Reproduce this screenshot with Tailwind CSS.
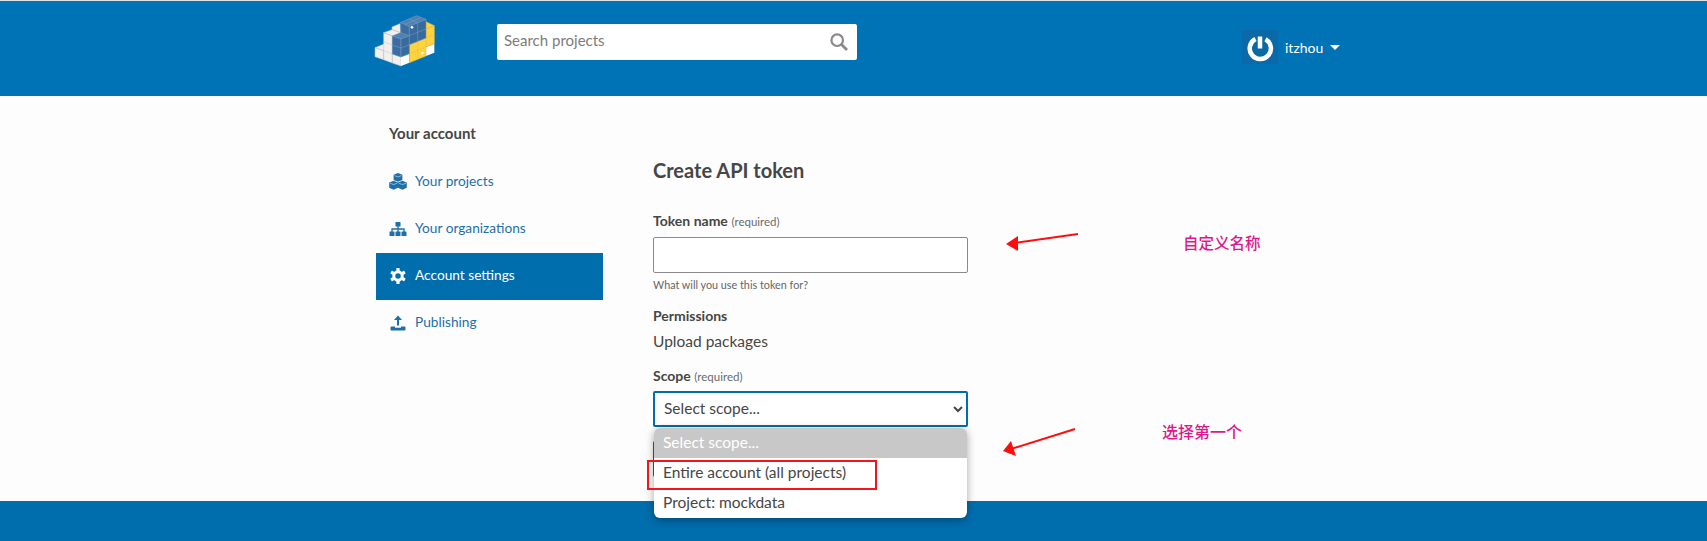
<!DOCTYPE html>
<html lang="en">
<head>
  <meta charset="UTF-8">
  <title>Create API token</title>
  <script src="https://cdn.jsdelivr.net/npm/@tailwindcss/browser@4"></script>
</head>
<body class="relative h-[541px] overflow-hidden bg-[#fdfdfd] text-[#464646] font-['Lato','Noto_Sans',sans-serif] flex flex-col">

<!-- header -->
<header class="h-[96px] shrink-0 bg-[#0073b7] border-t border-[#dfe3e6] flex pl-[365px]">
  <svg class="mt-[4px] shrink-0" width="100" height="70" viewBox="0 0 300 210">
    <!-- white stack -->
    <g fill="#f1f0ee" stroke="#c4c6c8" stroke-width="1.6" stroke-linejoin="round">
      <polygon points="81,74 81,66 105,56 107,83"/>
      <polygon points="56,83 82,93 107,83 81,74"/>
      <polygon points="30,128 56,137 81,127 55,118"/>
      <polygon points="56,164 30,155 30,128 56,137"/>
      <polygon points="82,174 56,164 56,83 82,93"/>
      <polygon points="108,183 82,174 82,147 108,156"/>
      <path d="M56,137 L82,147 M56,110 L82,120" fill="none"/>
    </g>
    <polygon points="108,183 133,173 133,146 108,156" fill="#ffffff"/>
    <polygon points="183,153 208,143 208,116 183,126" fill="#ffffff"/>
    <!-- yellow -->
    <g fill="#ffd242" stroke="#eebc2c" stroke-width="1.6" stroke-linejoin="round">
      <polygon points="183,72 208,62 183,50"/>
      <polygon points="183,126 208,116 208,62 183,72"/>
      <polygon points="133,173 183,153 183,99 133,119"/>
      <path d="M133,146 L183,126 M158,163 V109 M183,99 L208,89" fill="none"/>
    </g>
    <!-- blue -->
    <g fill="#3b6da1" stroke="#7a9dc2" stroke-width="1.6" stroke-linejoin="round">
      <polygon points="108,102 82,93 107,83 133,92" fill="#4f80b0"/>
      <polygon points="108,156 82,147 82,93 108,102"/>
      <polygon points="108,156 133,146 133,92 108,102" fill="#376a9d"/>
      <polygon points="133,65 107,52 107,83 133,92"/>
      <polygon points="133,119 183,99 183,43 133,63" fill="#376a9d"/>
      <polygon points="133,63 107,52 155,32 183,43" fill="#4f80b0"/>
      <path d="M82,120 L108,129 M108,129 L133,119 M133,92 L183,72 M158,109 V53 M120,58 L170,38 M158,53 L132,42" fill="none"/>
    </g>
    <circle cx="141" cy="67" r="4" fill="#ffffff"/>
    <circle cx="172" cy="144" r="4" fill="#ffffff"/>
  </svg>

  <div class="ml-[32px] mt-[23px] w-[360px] h-[36px] bg-white rounded-[2px] flex items-center justify-between pl-[7px] pr-[9px]">
    <span class="pb-[3px] text-[15px] text-[#7c7c7c]">Search projects</span>
    <svg width="18" height="18" viewBox="0 0 18 18" fill="none" stroke="#8a8a8a" stroke-width="2.2">
      <circle cx="7.2" cy="7.2" r="5.8"/>
      <path d="M11.5 11.5 L17 17" stroke-width="2.8"/>
    </svg>
  </div>

  <div class="ml-[385px] mt-[29px] h-[34px] flex items-center">
    <div class="w-[36px] h-[34px] bg-[#0b69a8] flex items-center justify-center">
      <svg class="mt-[2px]" width="28" height="28" viewBox="0 0 28 28" fill="none" stroke="#ffffff" stroke-width="4.5">
        <path d="M9.5 5 A10.6 10.6 0 1 0 19.5 5.2"/>
        <path d="M14 2.5 V14.5"/>
      </svg>
    </div>
    <span class="ml-[7px] text-[14px] text-white">itzhou</span>
    <span class="ml-[7px] w-0 h-0 border-x-[5px] border-x-transparent border-t-[5px] border-t-white"></span>
  </div>
</header>

<!-- page body -->
<main class="flex-1 flex pl-[376px]">
  <nav class="w-[227px] shrink-0 pt-[26px] text-[13.7px]">
    <h3 class="pl-[13px] mb-[13px] h-[24px] leading-[22px] text-[15px] font-bold">Your account</h3>

    <a class="h-[47px] flex items-center pl-[13px] pb-[2px] text-[#1f6fa8]">
      <svg class="w-[18px] mr-[8px]" width="18" height="17" viewBox="0 0 18 17" fill="#1f6fa8">
        <path d="M9 0 L13.4 1.7 V7 L9 8.7 L4.6 7 V1.7 Z"/>
        <path d="M4.6 7.8 L9 9.5 V14.8 L4.6 16.8 L0.2 14.8 V9.5 Z"/>
        <path d="M13.4 7.8 L17.8 9.5 V14.8 L13.4 16.8 L9 14.8 V9.5 Z"/>
        <path d="M5.5 2.6 L9 4 L12.5 2.6 M1 10.2 L4.6 11.6 L8.2 10.2 M9.8 10.2 L13.4 11.6 L17 10.2" fill="none" stroke="#ffffff" stroke-width="0.5"/>
      </svg>
      Your projects
    </a>
    <a class="h-[47px] flex items-center pl-[13px] pb-[2px] text-[#1f6fa8]">
      <svg class="w-[18px] mr-[8px]" width="18" height="14" viewBox="0 0 18 14" fill="#1f6fa8">
        <rect x="6.5" y="0" width="5" height="4.5" rx="0.6"/>
        <rect x="0.5" y="9.5" width="5" height="4.5" rx="0.6"/>
        <rect x="6.5" y="9.5" width="5" height="4.5" rx="0.6"/>
        <rect x="12.5" y="9.5" width="5" height="4.5" rx="0.6"/>
        <path d="M9 4 V10 M3 10 V7 H15 V10" fill="none" stroke="#1f6fa8" stroke-width="1.3"/>
      </svg>
      Your organizations
    </a>
    <a class="h-[47px] flex items-center pl-[13px] pb-[2px] bg-[#006dad] text-white">
      <svg class="w-[18px] mr-[8px]" width="18" height="16" viewBox="0 0 16 16">
        <circle cx="8" cy="8" r="4.2" fill="none" stroke="#ffffff" stroke-width="2.9"/>
        <g fill="#ffffff">
          <rect x="6.4" y="0" width="3.2" height="3.2" rx="0.5"/>
          <rect x="6.4" y="12.8" width="3.2" height="3.2" rx="0.5"/>
          <rect x="6.4" y="0" width="3.2" height="3.2" rx="0.5" transform="rotate(60 8 8)"/>
          <rect x="6.4" y="12.8" width="3.2" height="3.2" rx="0.5" transform="rotate(60 8 8)"/>
          <rect x="6.4" y="0" width="3.2" height="3.2" rx="0.5" transform="rotate(120 8 8)"/>
          <rect x="6.4" y="12.8" width="3.2" height="3.2" rx="0.5" transform="rotate(120 8 8)"/>
        </g>
      </svg>
      Account settings
    </a>
    <a class="h-[47px] flex items-center pl-[13px] pb-[2px] text-[#1f6fa8]">
      <svg class="w-[18px] mr-[8px]" width="18" height="16" viewBox="0 0 18 16" fill="#1f6fa8">
        <path d="M9 0.5 L13 5 H10 V10.5 H8 V5 H5 Z"/>
        <path d="M1.5 12.5 Q1.5 11.5 2.5 11.5 H6 V12.8 H12 V11.5 H15.5 Q16.5 11.5 16.5 12.5 V14.5 Q16.5 15.5 15.5 15.5 H2.5 Q1.5 15.5 1.5 14.5 Z"/>
      </svg>
      Publishing
    </a>
  </nav>

  <section class="ml-[50px] w-[315px] pt-[61px]">
    <h1 class="h-[28px] leading-[26px] text-[20px] font-bold">Create API token</h1>

    <label class="block mt-[27px] h-[20px] leading-[18px] text-[14px]"><b>Token name</b> <span class="text-[11.5px] text-[#6b6b6b]">(required)</span></label>
    <input type="text" class="block mt-[5px] w-full h-[36px] bg-white border border-[#8a8a8a] rounded-[2px]">
    <p class="mt-[4px] h-[16px] leading-[15px] text-[10.8px] text-[#666666]">What will you use this token for?</p>

    <p class="mt-[13px] h-[20px] leading-[20px] text-[14px] font-bold">Permissions</p>
    <p class="mt-[4px] h-[24px] leading-[22px] text-[15.5px]">Upload packages</p>

    <label class="block mt-[12px] h-[20px] leading-[20px] text-[14px]"><b>Scope</b> <span class="text-[11.5px] text-[#6b6b6b]">(required)</span></label>
    <div class="relative mt-[5px]">
      <select class="block w-full h-[36px] bg-white border-2 border-[#006dad] rounded-[2px] pl-[5px] pb-[2px] text-[15.5px] text-[#464646]">
        <option>Select scope...</option>
      </select>
      <div class="mt-[14px] w-[110px] h-[36px] bg-[#006dad] rounded-[2px]"></div>

      <!-- open dropdown -->
      <ul class="absolute z-10 top-[37px] left-[1px] right-[1px] bg-white rounded-[6px] overflow-hidden shadow-[0_2px_8px_rgba(0,0,0,0.35)] text-[15.5px]">
        <li class="h-[30px] leading-[28px] pl-[9px] bg-[#c8c8c8] text-white">Select scope...</li>
        <li class="h-[30px] leading-[28px] pl-[9px]">Entire account (all projects)</li>
        <li class="h-[30px] leading-[28px] pl-[9px]">Project: mockdata</li>
      </ul>
    </div>
  </section>
</main>

<footer class="h-[40px] shrink-0 bg-[#006dad]"></footer>

<!-- screenshot annotations -->
<div class="absolute z-20 left-[647px] top-[460px] w-[230px] h-[30px] border-2 border-[#f5141c]"></div>
<svg class="absolute z-20 left-0 top-0 pointer-events-none" width="1707" height="541" fill="#ff0d0d" stroke="#ff0d0d">
  <path d="M1078 234 L1014 243" stroke-width="2" fill="none"/>
  <polygon points="1006,244 1018,236 1018,251" stroke="none"/>
  <path d="M1075 429 L1011 449" stroke-width="2" fill="none"/>
  <polygon points="1003,451 1011,441 1016,456" stroke="none"/>
</svg>
<span class="absolute z-20 left-[1183px] top-[232px] text-[15.5px] leading-[20px] font-medium text-[#e0168c] font-['Noto_Sans_CJK_SC',sans-serif]">自定义名称</span>
<span class="absolute z-20 left-[1162px] top-[421px] text-[16px] leading-[20px] font-medium text-[#e0168c] font-['Noto_Sans_CJK_SC',sans-serif]">选择第一个</span>

</body>
</html>
